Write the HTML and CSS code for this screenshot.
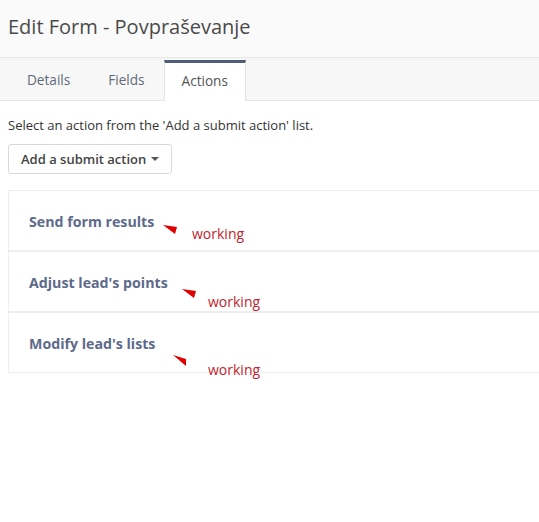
FILE: index.html
```html
<!DOCTYPE html>
<html>
<head>
<meta charset="utf-8">
<link rel="stylesheet" href="styles.css">
</head>
<body>
<header class="page-header">
  <h1 class="title">Edit Form - Povpraševanje</h1>
</header>
<nav class="tabs">
  <a class="tab">Details</a>
  <a class="tab">Fields</a>
  <a class="tab active">Actions</a>
</nav>
<main class="content">
  <p class="hint">Select an action from the 'Add a submit action' list.</p>
  <button class="btn">Add a submit action <span class="caret"></span></button>
  <div class="panel">
    <div class="row">
      <span class="row-title">Send form results</span>
      <span class="note note1">
        <svg class="arrow" width="16" height="12" viewBox="0 0 16 12"><polygon points="0,1 14,3 12,10" fill="#e00000"/></svg>
        <span class="note-text">working</span>
      </span>
    </div>
    <div class="row">
      <span class="row-title">Adjust lead's points</span>
      <span class="note note2">
        <svg class="arrow" width="16" height="12" viewBox="0 0 16 12"><polygon points="0,1 14,3 12,10" fill="#e00000"/></svg>
        <span class="note-text">working</span>
      </span>
    </div>
    <div class="row">
      <span class="row-title">Modify lead's lists</span>
      <span class="note note3">
        <svg class="arrow" width="16" height="12" viewBox="0 0 16 12"><polygon points="0,0 13,4 13,11" fill="#e00000"/></svg>
        <span class="note-text">working</span>
      </span>
    </div>
  </div>
</main>
</body>
</html>
```

FILE: styles.css
```css
* { box-sizing: border-box; }
html, body { margin: 0; padding: 0; background: #fff; }
body {
  font-family: "Open Sans", "Liberation Sans", sans-serif;
  color: #333;
  min-height: 100vh;
}
.page-header {
  height: 58px;
  background: #fafafa;
  border-bottom: 1px solid #e6e6e6;
  display: flex;
  align-items: center;
  padding: 0 8px;
}
.title {
  margin: 0;
  font-size: 20px;
  font-weight: 400;
  color: #4a4a4a;
  position: relative;
  top: -2px;
}
.tabs {
  height: 43px;
  background: #f7f7f7;
  border-bottom: 1px solid #e3e3e3;
  display: flex;
  align-items: stretch;
  padding-left: 8px;
}
.tab {
  display: flex;
  align-items: center;
  padding: 1px 19px 0;
  font-size: 13.6px;
  color: #5f6b78;
}
.tab.active {
  background: #fff;
  border-top: 3px solid #4e5d78;
  border-left: 1px solid #e3e3e3;
  border-right: 1px solid #e3e3e3;
  margin: 2px 0 -1px;
  padding: 0 17px 3px;
  color: #555;
}
.content { padding: 0 0 40px 8px; }
.hint {
  margin: 15px 0 10px;
  font-size: 13px;
  line-height: 18px;
  color: #333;
}
.btn {
  display: inline-flex;
  align-items: center;
  height: 30px;
  padding: 0 12px;
  background: #fff;
  border: 1px solid #d9d9d9;
  border-radius: 3px;
  font-family: "Open Sans", "Liberation Sans", sans-serif;
  font-size: 13px;
  font-weight: 600;
  color: #444;
}
.caret {
  display: inline-block;
  width: 0;
  height: 0;
  margin-left: 5px;
  border-top: 4px solid #555;
  border-left: 4px solid transparent;
  border-right: 4px solid transparent;
}
.panel {
  margin-top: 16px;
  border: 1px solid #eee;
  border-right: none;
}
.row {
  position: relative;
  height: 61px;
  padding: 19px 20px 0;
  border-bottom: 2px solid #eee;
}
.row:last-child { border-bottom: none; height: 59px; }
.row-title {
  font-size: 14.2px;
  font-weight: 700;
  color: #5d6a8a;
}
.note {
  position: absolute;
  display: block;
}
.arrow { position: absolute; left: 0; top: 0; }
.note-text {
  position: absolute;
  white-space: nowrap;
  font-family: "Open Sans", "Liberation Sans", sans-serif;
  font-size: 14px;
  color: #c0242c;
}
.note1 { left: 154px; top: 33px; }
.note1 .note-text { left: 29px; top: 0px; }
.note2 { left: 173px; top: 36px; }
.note2 .note-text { left: 26px; top: 4px; }
.note3 { left: 164px; top: 42px; }
.note3 .note-text { left: 35px; top: 5px; }
```
